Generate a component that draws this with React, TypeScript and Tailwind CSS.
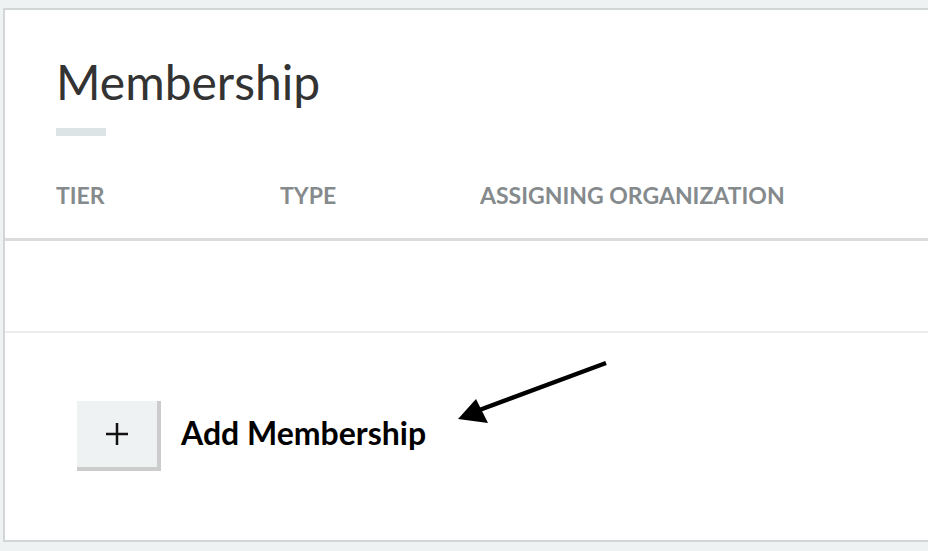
import React from "react";

export default function App() {
  return (
    <div
      className="relative w-[928px] h-[551px] overflow-hidden bg-[#eff2f2] pt-[8px] pl-[3px]"
      style={{ fontFamily: "Lato, 'Open Sans', sans-serif" }}
    >
      <div className="w-[940px] h-[534px] bg-white border-2 border-[#d3d6d6]">
        <div className="pl-[51px] pt-[44px]">
          <h1 className="text-[48px] leading-[56px] text-[#333333] font-normal">Membership</h1>
          <div className="mt-[18px] w-[50px] h-[8px] bg-[#dde4e6]" />
        </div>
        <div className="flex items-end h-[105px] pl-[51px] pb-[31px] border-b-[3px] border-[#dcdcdc] text-[23px] font-bold text-[#858a8c] leading-none">
          <div className="w-[224px]">TIER</div>
          <div className="w-[200px]">TYPE</div>
          <div>ASSIGNING ORGANIZATION</div>
        </div>
        <div className="h-[92px] border-b-2 border-[#ececec]" />
        <div className="flex items-center pl-[72px] pt-[68px]">
          <button className="flex items-center justify-center w-[84px] h-[70px] bg-[#eff2f2] border-r-4 border-b-4 border-[#cccccc]">
            <svg width="24" height="24" viewBox="0 0 24 24">
              <path d="M12 1v22M1 12h22" stroke="#111" strokeWidth="2.5" />
            </svg>
          </button>
          <span className="ml-[20px] mb-[6px] text-[32px] font-bold text-black leading-none">Add Membership</span>
        </div>
      </div>
      <svg className="absolute left-0 top-0" width="928" height="551" viewBox="0 0 928 551">
        <line x1="606" y1="363" x2="474" y2="412" stroke="#000" strokeWidth="4.5" />
        <polygon points="458,419 476,399 488,423" fill="#000" />
      </svg>
    </div>
  );
}
